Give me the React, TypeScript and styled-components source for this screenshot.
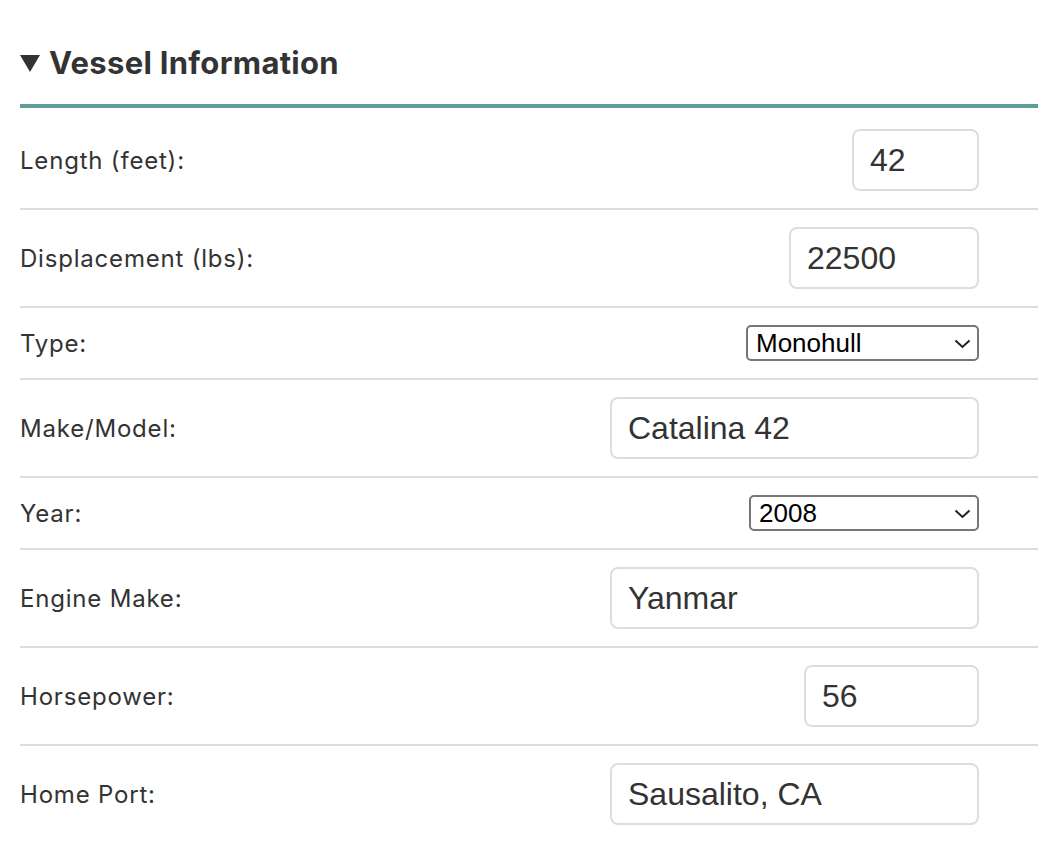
import * as React from 'react'
import styled, { createGlobalStyle } from 'styled-components'

const GlobalStyle = createGlobalStyle`
  html, body {
    margin: 0;
    padding: 0;
    background: #ffffff;
  }
  body {
    font-family: Inter, "Liberation Sans", Arial, sans-serif;
    color: #333333;
  }
`

const Page = styled.div`
  padding: 0 20px;
`

const Heading = styled.h2`
  margin: 0;
  padding: 45px 0 23px;
  display: flex;
  align-items: center;
  font-family: Inter, "Liberation Sans", sans-serif;
  font-size: 31px;
  letter-spacing: 0.3px;
  line-height: 36px;
  font-weight: 700;
  color: #333333;
  border-bottom: 4px solid #5f9e98;
`

const Marker = styled.span`
  width: 0;
  height: 0;
  border-left: 10px solid transparent;
  border-right: 10px solid transparent;
  border-top: 17px solid #333333;
  margin-right: 9px;
`

const Rows = styled.div`
  margin-top: 4px;
`

const Row = styled.div`
  display: flex;
  align-items: center;
  justify-content: space-between;
  padding: 17px 59px 17px 0;
  border-bottom: 2px solid #dddddd;

  &:last-child {
    border-bottom: none;
  }
`

const Label = styled.label`
  font-family: Inter, "Liberation Sans", sans-serif;
  font-size: 24px;
  letter-spacing: 0.8px;
  color: #333333;
`

const TextInput = styled.input<{ $width: number }>`
  box-sizing: border-box;
  width: ${p => p.$width}px;
  height: 62px;
  padding: 0 16px;
  border: 2px solid #dddddd;
  border-radius: 8px;
  font-family: "Liberation Sans", Arial, sans-serif;
  font-size: 32px;
  color: #333333;
  background: #ffffff;
  outline: none;
`

const SelectWrap = styled.div<{ $width: number }>`
  position: relative;
  width: ${p => p.$width}px;
`

const Select = styled.select`
  box-sizing: border-box;
  width: 100%;
  height: 36px;
  padding: 0 30px 0 8px;
  appearance: none;
  -webkit-appearance: none;
  border: 2px solid #767676;
  border-radius: 5px;
  background: #ffffff;
  font-family: "Liberation Sans", Arial, sans-serif;
  font-size: 26px;
  color: #000000;
  outline: none;
`

const Chevron = styled.svg`
  position: absolute;
  right: 8px;
  top: 50%;
  width: 17px;
  height: 10px;
  margin-top: -4px;
  pointer-events: none;
`

type Field =
  | { label: string; kind: 'input'; value: string; width: number }
  | { label: string; kind: 'select'; value: string; options: string[]; width: number }

const fields: Field[] = [
  { label: 'Length (feet):', kind: 'input', value: '42', width: 127 },
  { label: 'Displacement (lbs):', kind: 'input', value: '22500', width: 190 },
  { label: 'Type:', kind: 'select', value: 'Monohull', options: ['Monohull', 'Catamaran', 'Trimaran'], width: 233 },
  { label: 'Make/Model:', kind: 'input', value: 'Catalina 42', width: 369 },
  { label: 'Year:', kind: 'select', value: '2008', options: ['2006', '2007', '2008', '2009', '2010'], width: 230 },
  { label: 'Engine Make:', kind: 'input', value: 'Yanmar', width: 369 },
  { label: 'Horsepower:', kind: 'input', value: '56', width: 175 },
  { label: 'Home Port:', kind: 'input', value: 'Sausalito, CA', width: 369 },
]

export default function App() {
  return (
    <Page>
      <GlobalStyle />
      <Heading>
        <Marker />
        Vessel Information
      </Heading>
      <Rows>
        {fields.map(f => (
          <Row key={f.label}>
            <Label>{f.label}</Label>
            {f.kind === 'input' ? (
              <TextInput $width={f.width} defaultValue={f.value} />
            ) : (
              <SelectWrap $width={f.width}>
                <Select defaultValue={f.value}>
                  {f.options.map(o => (
                    <option key={o}>{o}</option>
                  ))}
                </Select>
                <Chevron viewBox="0 0 17 10">
                  <path d="M1.5 1.5 L8.5 8 L15.5 1.5" fill="none" stroke="#222" strokeWidth="2" />
                </Chevron>
              </SelectWrap>
            )}
          </Row>
        ))}
      </Rows>
    </Page>
  )
}
